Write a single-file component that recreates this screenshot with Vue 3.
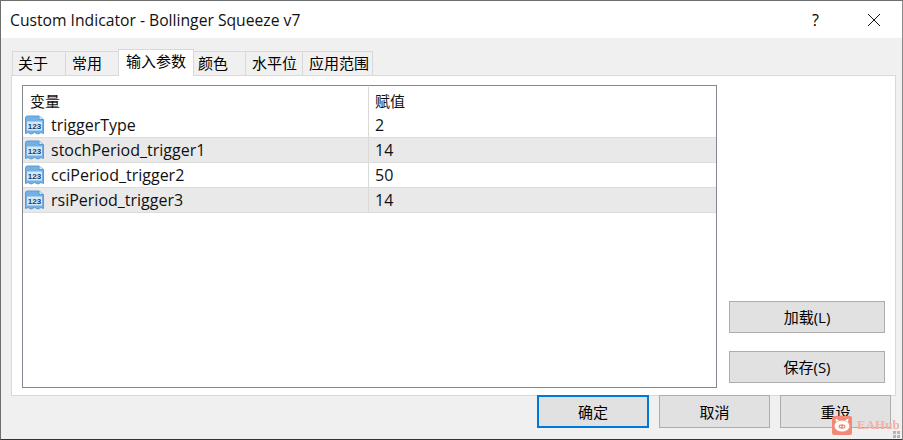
<script setup>
const tabs = [
  { label: '关于', width: 54, pad: 5 },
  { label: '常用', width: 54, pad: 6 },
  { label: '输入参数', width: 76, pad: 7, active: true },
  { label: '颜色', width: 53, pad: 4 },
  { label: '水平位', width: 58, pad: 6 },
  { label: '应用范围', width: 71, pad: 6 },
]

const rows = [
  { name: 'triggerType', value: '2' },
  { name: 'stochPeriod_trigger1', value: '14' },
  { name: 'cciPeriod_trigger2', value: '50' },
  { name: 'rsiPeriod_trigger3', value: '14' },
]
</script>

<template>
  <div class="dialog">
    <div class="titlebar">
      <span class="title">Custom Indicator - Bollinger Squeeze v7</span>
      <span class="help">?</span>
      <svg class="close" width="14" height="14" viewBox="0 0 14 14">
        <path d="M1 1L13 13M13 1L1 13" stroke="#111" stroke-width="1" fill="none" />
      </svg>
    </div>

    <div class="body">
      <div class="tabs">
        <div
          v-for="tab in tabs"
          :key="tab.label"
          class="tab"
          :class="{ active: tab.active }"
          :style="{ width: tab.width + 'px', paddingLeft: tab.pad + 'px' }"
        >
          {{ tab.label }}
        </div>
      </div>

      <div class="panel">
        <div class="list">
          <div class="row head">
            <div class="cell name-cell">变量</div>
            <div class="cell">赋值</div>
          </div>
          <div v-for="(row, idx) in rows" :key="row.name" class="row" :class="{ alt: idx % 2 === 1 }">
            <div class="cell name-cell">
              <svg class="param-icon" width="21" height="21" viewBox="0 0 21 21">
                <path d="M1.5 3Q1.5 1 3.5 1H15L19.5 4.5V18.5L17 17.5L14 19L10.5 17.5L7 19L4 17.5L1.5 18.5Z" fill="#74b0e4" stroke="#5a9ad6" stroke-width="1" />
                <path d="M15 1V4.5H19.5" fill="#d8ebfa" stroke="#5a9ad6" stroke-width="1" />
                <rect x="3" y="6.5" width="15" height="9" fill="#d5e8f8" />
                <text x="10.5" y="14.2" class="icon-text" text-anchor="middle">123</text>
              </svg>
              <span>{{ row.name }}</span>
            </div>
            <div class="cell">{{ row.value }}</div>
          </div>
        </div>

        <div class="side">
          <button class="btn side-btn">加载(L)</button>
          <button class="btn side-btn">保存(S)</button>
        </div>
      </div>

      <div class="footer">
        <button class="btn foot-btn primary">确定</button>
        <button class="btn foot-btn">取消</button>
        <button class="btn foot-btn">重设</button>
      </div>
    </div>

    <!-- watermark sits over the reset button -->
    <div class="watermark">
      <svg width="20" height="20" viewBox="0 0 20 20">
        <rect x="0" y="1" width="20" height="19" rx="2" fill="#f08a76" />
        <path d="M4 7L3.5 3.5L7 5.5ZM16 7L16.5 3.5L13 5.5Z" fill="#fff" />
        <ellipse cx="10" cy="11" rx="7.5" ry="5.5" fill="#fff" />
        <ellipse cx="10" cy="11.5" rx="3.4" ry="2.2" fill="#f08a76" />
        <circle cx="8.6" cy="11.5" r="0.8" fill="#fff" />
        <circle cx="11.4" cy="11.5" r="0.8" fill="#fff" />
      </svg>
      <span>EAHub</span>
    </div>
    <div class="grip">
      <i></i><i></i><i></i><i></i>
    </div>
  </div>
</template>

<style scoped>
.dialog {
  position: relative;
  width: 903px;
  height: 440px;
  box-sizing: border-box;
  border: 1px solid #6e6e6e;
  border-right-color: #8a8a8a;
  border-bottom-color: #333;
  background: #f0f0f0;
  font-family: "Open Sans", "Noto Sans CJK SC", sans-serif;
  font-size: 15px;
  color: #000;
  overflow: hidden;
}

.titlebar {
  height: 37px;
  background: #fff;
  display: flex;
  align-items: center;
  padding-left: 9px;
}

.title {
  flex: 1;
  font-size: 15.7px;
  color: #111;
}

.help {
  font-size: 16px;
  margin-right: 48px;
}

.close {
  margin-right: 21px;
}

.body {
  padding: 12px 7px 0 10px;
}

.tabs {
  display: flex;
  height: 25px;
  align-items: flex-end;
  padding-left: 1px;
}

.tab {
  box-sizing: border-box;
  height: 24px;
  margin-right: -1px;
  border: 1px solid #d9d9d9;
  border-bottom: none;
  background: #f0f0f0;
  display: flex;
  align-items: center;
  line-height: 1;
}

.tab.active {
  height: 27px;
  padding-bottom: 3px;
  background: #fff;
  position: relative;
  z-index: 1;
  margin-bottom: -1px;
}

.panel {
  box-sizing: border-box;
  width: 885px;
  height: 321px;
  border: 1px solid #d9d9d9;
  background: #fff;
  display: flex;
  padding: 9px 9px 7px 10px;
}

.list {
  box-sizing: border-box;
  width: 695px;
  height: 303px;
  border: 1px solid #828790;
  background: #fff;
  padding-top: 1px;
}

.row {
  display: grid;
  grid-template-columns: 345px 1fr;
  height: 25px;
  box-sizing: border-box;
  border-bottom: 1px solid #dcdcdc;
}

.row.alt {
  background: #e9e9e9;
}

.row.head {
  height: 26px;
  border-bottom: none;
}

.cell {
  display: flex;
  align-items: center;
  padding-left: 6px;
  white-space: nowrap;
  font-size: 16px;
  color: #111;
  border-left: 1px solid #d9d9d9;
}

.head .cell {
  font-size: 15px;
}

.head .name-cell {
  padding-left: 7px;
}

.name-cell {
  border-left: none;
}

.row:not(.head) .name-cell {
  padding-left: 1px;
}

.param-icon {
  flex: none;
  margin-right: 6px;
}

.icon-text {
  font-family: "Liberation Sans", sans-serif;
  font-size: 8px;
  font-weight: 700;
  fill: #163f73;
}

.side {
  display: flex;
  flex-direction: column;
  gap: 18px;
  margin-left: 12px;
  padding-top: 216px;
}

.btn {
  box-sizing: border-box;
  border: 1px solid #adadad;
  background: #e1e1e1;
  font-family: inherit;
  font-size: 15px;
  color: #000;
  padding: 0 0 1px;
  height: 32px;
}

.side-btn {
  width: 156px;
}

.footer {
  display: flex;
  justify-content: flex-end;
  gap: 10px;
  margin-top: -1px;
  padding-right: 4px;
}

.foot-btn {
  width: 111px;
  height: 33px;
}

.primary {
  width: 112px;
  border: 2px solid #0078d7;
}

.watermark {
  position: absolute;
  left: 831px;
  top: 414px;
  display: flex;
  align-items: center;
  gap: 5px;
  font-family: "Liberation Serif", serif;
  font-size: 13px;
  font-weight: 700;
  color: #f5b0a4;
}

.grip {
  position: absolute;
  right: 2px;
  bottom: 1px;
  display: grid;
  grid-template-columns: 3px 3px;
  gap: 1px;
}

.grip i {
  display: block;
  width: 3px;
  height: 3px;
  background: #b5b5b5;
}
</style>
